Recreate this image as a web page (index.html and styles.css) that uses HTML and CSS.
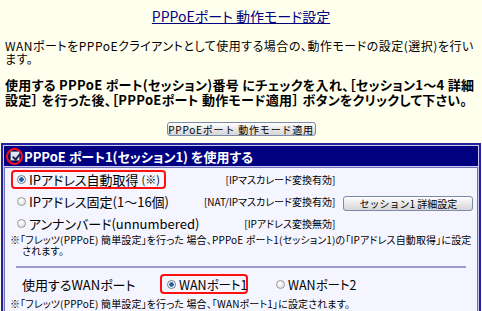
FILE: index.html
```html
<!DOCTYPE html>
<html lang="ja">

<head>
    <meta charset="UTF-8">
    <title>PPPoEポート 動作モード設定</title>
    <link rel="stylesheet" href="styles.css">
</head>

<body>
    <div class="page">
        <h1 class="title"><a href="#">PPPoEポート 動作モード設定</a></h1>

        <p class="intro">WANポートをPPPoEクライアントとして使用する場合の、動作モードの設定(選択)を行います。</p>
        <p class="lead">使用する PPPoE ポート(セッション)番号 にチェックを入れ、［セッション1～4 詳細設定］ を行った後、［PPPoEポート 動作モード適用］ ボタンをクリックして下さい。</p>

        <div class="apply">
            <button class="btn apply-btn">PPPoEポート 動作モード適用</button>
        </div>

        <div class="session">
            <div class="session-head">
                <span class="mark-circle"><span class="check"></span></span>
                <span class="head-text">PPPoE ポート1(セッション1) を使用する</span>
            </div>
            <div class="session-body">
                <div class="modes">
                    <div class="mode">
                        <span class="mark-box"><span class="radio on"></span>IPアドレス自動取得 <small>(※)</small></span>
                    </div>
                    <div class="tag">[IPマスカレード変換有効]</div>
                    <div></div>

                    <div class="mode"><span class="radio"></span>IPアドレス固定(1～16個)</div>
                    <div class="tag">[NAT/IPマスカレード変換有効]</div>
                    <div><button class="btn detail-btn">セッション1 詳細設定</button></div>

                    <div class="mode"><span class="radio"></span>アンナンバード(unnumbered)</div>
                    <div class="tag">[IPアドレス変換無効]</div>
                    <div></div>
                </div>
                <p class="note">※「フレッツ(PPPoE) 簡単設定」を行った 場合、PPPoE ポート1(セッション1)の「IPアドレス自動取得」に設定されます。</p>

                <div class="wan">
                    <span class="wan-label">使用するWANポート</span>
                    <span class="mark-box wan-pick"><span class="radio on"></span>WANポート1</span>
                    <span class="wan-pick"><span class="radio"></span>WANポート2</span>
                </div>
                <p class="note last">※「フレッツ(PPPoE) 簡単設定」を行った 場合、「WANポート1」に設定されます。</p>
            </div>
        </div>
    </div>
</body>

</html>
```

FILE: styles.css
```css
* {
    margin: 0;
    padding: 0;
    box-sizing: border-box;
}

body {
    background: #ffffee;
    color: #000;
    font-family: "Noto Sans CJK JP", "Noto Sans", sans-serif;
    font-feature-settings: "palt";
}

.page {
    padding: 0 1px;
}

.title {
    text-align: center;
    font-size: 14px;
    font-weight: normal;
    line-height: 16px;
    padding-top: 8px;
}

.title a {
    color: #000080;
    text-decoration: underline;
}

.intro {
    margin: 15px 4px 0;
    font-size: 12px;
    line-height: 13px;
    letter-spacing: 0.5px;
}

.lead {
    margin: 12px 4px 0;
    font-size: 13px;
    font-weight: bold;
    line-height: 15px;
    letter-spacing: 0.3px;
}

.apply {
    display: flex;
    justify-content: center;
    margin-top: 15px;
}

.btn {
    font-family: inherit;
    font-size: 10px;
    line-height: 11px;
    color: #000;
    white-space: nowrap;
    padding: 0;
    background: linear-gradient(#ffffff, #e4e4e4 60%, #d6d6d6);
    border: 1px solid #7a8aa8;
    border-radius: 3px;
}

.apply-btn {
    width: 149px;
    height: 14px;
    letter-spacing: 0.8px;
}

.session {
    margin-top: 7px;
    border: 2px solid #22229a;
    background: #c8c8f0;
    padding: 1px;
}

.session-head {
    display: flex;
    align-items: center;
    height: 20px;
    background: #000080;
    color: #fff;
    padding-left: 2px;
    margin-bottom: 1px;
}

.head-text {
    font-size: 13px;
    font-weight: bold;
    white-space: nowrap;
}

.mark-circle {
    display: flex;
    align-items: center;
    justify-content: center;
    width: 17px;
    height: 17px;
    border: 2px solid #ff1010;
    border-radius: 50%;
    margin-right: 1px;
}

.check {
    display: block;
    width: 10px;
    height: 10px;
    border: 1px solid #667;
    background: #dde4f4;
    position: relative;
}

.check::after {
    content: "";
    position: absolute;
    left: 3px;
    top: 0;
    width: 3px;
    height: 6px;
    border: solid #224;
    border-width: 0 2px 2px 0;
    transform: rotate(40deg);
}

.session-body {
    background: #f5f5ff;
    border: 1px solid #7070b8;
    padding: 1px 5px 2px;
}

.modes {
    display: grid;
    grid-template-columns: 1fr 142px 134px;
    align-items: center;
}

.mode {
    font-size: 13px;
    white-space: nowrap;
    display: flex;
    align-items: center;
    padding-left: 7px;
    height: 20px;
}

.mode small {
    font-size: 11px;
    margin-left: 3px;
}

.mark-box {
    display: inline-flex;
    align-items: center;
    white-space: nowrap;
    border: 2px solid #ff1010;
    border-radius: 4px;
    padding: 0 4px;
    margin-left: -6px;
    height: 19px;
}

.tag {
    font-size: 10px;
    white-space: nowrap;
    text-align: right;
    padding-right: 6px;
}

.detail-btn {
    width: 130px;
    height: 15px;
    margin-left: 2px;
}

.radio {
    display: inline-block;
    flex: none;
    width: 9px;
    height: 9px;
    border: 1px solid #9a9a9a;
    border-radius: 50%;
    background: radial-gradient(circle at 40% 35%, #fff, #d8d8d8);
    margin-right: 3px;
}

.radio.on {
    background: radial-gradient(circle, #1f5fa8 0 2px, #ffffff 2.5px);
    border-color: #6a7a8a;
}

.note {
    font-size: 10px;
    line-height: 11px;
    padding-left: 12px;
    text-indent: -12px;
    margin-top: 1px;
    letter-spacing: 0.15px;
}

.wan {
    display: flex;
    align-items: center;
    border-top: 2px solid #9c9cd4;
    margin: 10px 6px 0;
    padding-top: 6px;
    font-size: 13px;
    height: 28px;
}

.wan-label {
    width: 148px;
    padding-left: 6px;
    white-space: nowrap;
}

.wan-pick {
    display: inline-flex;
    align-items: center;
    white-space: nowrap;
    font-size: 12.5px;
}

.wan .mark-box {
    height: 20px;
    width: 88px;
    margin-left: -4px;
    margin-right: 28px;
    padding-left: 5px;
}

.note.last {
    margin-top: 4px;
    padding-bottom: 2px;
}
```
